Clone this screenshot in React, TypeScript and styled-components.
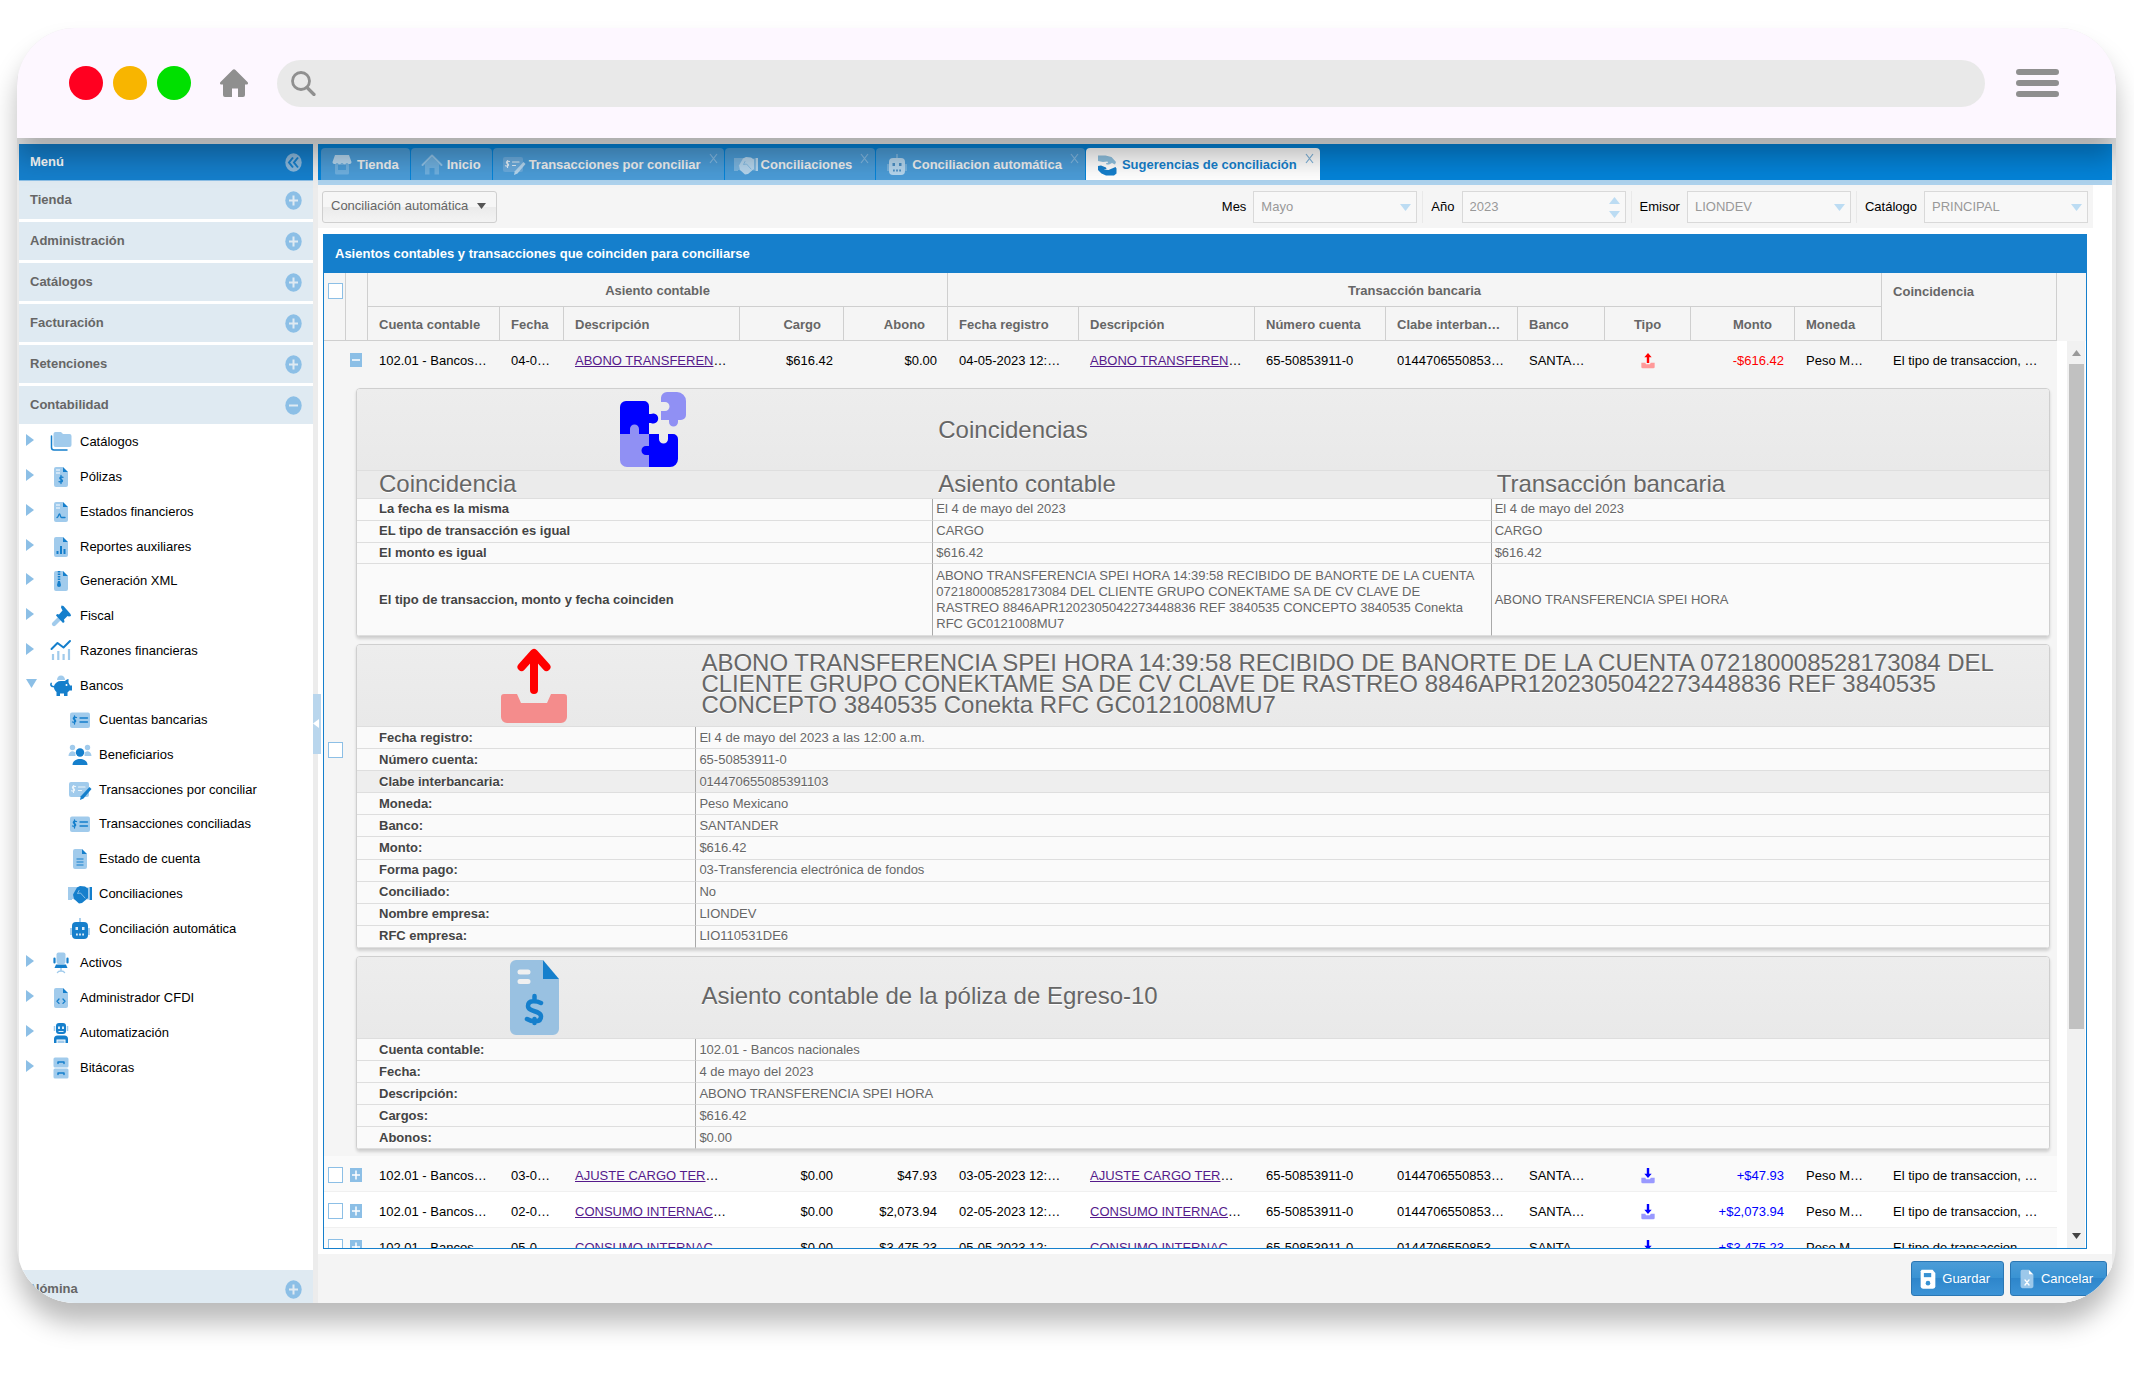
import React from "react";
import styled, { createGlobalStyle, css } from "styled-components";

const BLUE = "#157fcc";
const LIGHT = "#a1cbec";
const SOFT = "#8cbfe6";

const GlobalStyle = createGlobalStyle`
  *, *::before, *::after { box-sizing: border-box; }
  body {
    margin: 0;
    background: #fff;
    font-family: "Liberation Sans", Arial, sans-serif;
    font-size: 13px;
    line-height: 20px;
    color: #000;
  }
  button, input, select { font: inherit; }
  svg { display: block; flex: none; }
`;

/* ---------- window frame ---------- */

const Page = styled.div`
  display: flex;
  flex-direction: column;
  height: 100vh;
  padding: 28px 18px 72px 17px;
`;

const Frame = styled.div`
  display: flex;
  flex-direction: column;
  flex: 1;
  min-height: 0;
  border-radius: 58px;
  overflow: hidden;
  background: #ebebeb;
  box-shadow: 0 20px 26px rgba(0, 0, 0, 0.27);
`;

const BrowserBar = styled.header`
  position: relative;
  z-index: 2;
  display: flex;
  align-items: center;
  flex: none;
  height: 110px;
  padding: 0 57px 0 52px;
  background: #fdf7ff;
  box-shadow: 0 20px 26px rgba(0, 0, 0, 0.27);
`;

const Lights = styled.div`
  display: flex;
  gap: 10px;
`;

const Light = styled.span<{ $color: string }>`
  width: 34px;
  height: 34px;
  border-radius: 50%;
  background: ${(p) => p.$color};
`;

const PlainButton = styled.button`
  display: flex;
  align-items: center;
  justify-content: center;
  padding: 0;
  border: 0;
  background: none;
  cursor: pointer;
`;

const HomeButton = styled(PlainButton)`
  margin: 0 29px;
`;

const AddressBar = styled.label`
  display: flex;
  align-items: center;
  flex: 1;
  height: 47px;
  margin-right: 31px;
  padding: 0 24px 0 14px;
  border-radius: 24px;
  background: #e9e9e9;
`;

const AddressInput = styled.input`
  flex: 1;
  min-width: 0;
  margin-left: 10px;
  border: 0;
  outline: 0;
  background: transparent;
`;

const Workspace = styled.div`
  display: flex;
  flex: 1;
  min-height: 0;
  padding: 6px 4px 0 2px;
`;

/* ---------- sidebar ---------- */

const Sidebar = styled.nav`
  display: flex;
  flex-direction: column;
  flex: none;
  width: 294px;
  background: #fff;
  overflow: hidden;
`;

const SidebarTitle = styled.div`
  display: flex;
  align-items: center;
  justify-content: space-between;
  flex: none;
  height: 37px;
  padding: 0 11px;
  border-bottom: 1px solid ${SOFT};
  background: ${BLUE};
  color: #fff;
  font-weight: bold;
`;

const Accordion = styled.button<{ $pinned?: boolean }>`
  display: flex;
  align-items: center;
  justify-content: space-between;
  flex: none;
  height: 38px;
  margin: 0 0 ${(p) => (p.$pinned ? "-5px" : "3px")};
  margin-top: ${(p) => (p.$pinned ? "auto" : "0")};
  padding: 0 11px;
  border: 0;
  background: #dfeaf2;
  color: #666;
  font-weight: bold;
  text-align: left;
  cursor: pointer;
`;

const Tree = styled.ul`
  display: grid;
  grid-auto-rows: 1fr;
  flex: 0 1 660px;
  margin: -2px 0 0;
  padding: 0;
  list-style: none;
`;

const TreeItem = styled.li<{ $child?: boolean }>`
  display: flex;
  align-items: center;
  padding-left: ${(p) => (p.$child ? "49px" : "7px")};
`;

const TreeArrow = styled.span`
  width: 23px;
  padding-bottom: 4px;
`;

const TreeLabel = styled.a`
  display: flex;
  align-items: center;
  gap: 7px;
  color: #000;
  text-decoration: none;
`;

const Splitter = styled.div`
  position: relative;
  flex: none;
  width: 5px;
  background: #ececec;
`;

const SplitterHandle = styled.button`
  position: absolute;
  z-index: 1;
  left: 0;
  top: calc(50% - 30px);
  display: flex;
  align-items: center;
  width: 8px;
  height: 60px;
  padding: 0;
  border: 0;
  background: #b9d6ed;
`;

/* ---------- main column ---------- */

const Main = styled.main`
  display: flex;
  flex-direction: column;
  flex: 1;
  min-width: 0;
  background: #fff;
`;

const TabBar = styled.div`
  display: flex;
  align-items: flex-end;
  gap: 1px;
  flex: none;
  height: 41px;
  padding-left: 3px;
  border-bottom: 5px solid #add2ed;
  background: #0483d8;
`;

const Tab = styled.button<{ $active?: boolean; $closable?: boolean }>`
  position: relative;
  display: flex;
  align-items: center;
  gap: 3px;
  height: 32px;
  padding: 2px ${(p) => (p.$closable ? "23px" : "11px")} 0 9px;
  border: 0;
  border-radius: 4px 4px 0 0;
  background: ${(p) => (p.$active ? "#fff" : "#4b9cd7")};
  color: ${(p) => (p.$active ? BLUE : "#f0f0f0")};
  font-weight: bold;
  white-space: nowrap;
`;

const TabClose = styled.span`
  position: absolute;
  top: 5px;
  right: 6px;
`;

const Toolbar = styled.div`
  display: flex;
  align-items: center;
  justify-content: space-between;
  flex: none;
  height: 43px;
  margin-right: 19px;
  padding: 0 5px 0 4px;
  background: #f5f5f5;
`;

const MenuButton = styled.button`
  display: flex;
  align-items: center;
  gap: 9px;
  height: 32px;
  padding: 0 10px 2px 8px;
  border: 1px solid #cfcfcf;
  border-radius: 3px;
  background: linear-gradient(#f6f6f6 50%, #ebebeb 50%, #f3f3f3);
  color: #666;
`;

const Fields = styled.div`
  display: flex;
  align-items: center;
`;

const Field = styled.div`
  display: flex;
  align-items: center;
  gap: 7px;
  & + & {
    margin-left: 5px;
    padding-left: 8px;
    border-left: 1px solid #e9e9e9;
  }
`;

const FieldBox = styled.div`
  position: relative;
  width: 164px;
  height: 32px;
`;

const controlStyle = css`
  width: 100%;
  height: 100%;
  padding: 0 30px 0 7px;
  border: 1px solid #d9d9d9;
  border-radius: 0;
  background: #f8f8f8;
  color: #999;
  opacity: 1;
  appearance: none;
`;

const Select = styled.select`
  ${controlStyle}
`;

const TextInput = styled.input`
  ${controlStyle}
`;

const FieldTrigger = styled.span`
  position: absolute;
  top: 0;
  right: 6px;
  display: flex;
  flex-direction: column;
  justify-content: center;
  gap: 7px;
  height: 100%;
  padding-top: 2px;
  pointer-events: none;
`;

const Content = styled.div`
  display: flex;
  flex: 1;
  min-height: 0;
  padding: 6px 25px 5px 5px;
`;

const Panel = styled.section`
  display: flex;
  flex-direction: column;
  flex: 1;
  min-width: 0;
  border: 1px solid ${BLUE};
  background: #fff;
`;

const PanelTitle = styled.h2`
  flex: none;
  margin: 0;
  padding: 9px 11px;
  background: ${BLUE};
  color: #fff;
  font-size: 13px;
  line-height: 20px;
  font-weight: bold;
`;

/* ---------- grid ---------- */

const GridHead = styled.div`
  flex: none;
  padding-right: 29px;
  background: #f5f5f5;
`;

const GridTable = styled.table`
  width: 100%;
  table-layout: fixed;
  border-collapse: separate;
  border-spacing: 0;
`;

const HeadCell = styled.th<{ $align?: string; $tall?: boolean }>`
  height: 34px;
  padding: ${(p) => (p.$tall ? "9px" : "2px")} ${(p) => (p.$align === "right" ? "22px" : "11px")} 0 11px;
  border-right: 1px solid #cfcfcf;
  border-bottom: 1px solid #cfcfcf;
  color: #666;
  text-align: ${(p) => p.$align || "left"};
  vertical-align: ${(p) => (p.$tall ? "top" : "middle")};
  overflow: hidden;
  text-overflow: ellipsis;
  white-space: nowrap;
`;

const HeadCheck = styled(HeadCell)`
  padding: 10px 0 0 4px;
  vertical-align: top;
`;

const GridBody = styled.div`
  display: flex;
  flex: 1;
  min-height: 0;
  padding-right: 1px;
`;

const GridRows = styled.div`
  flex: 1;
  min-width: 0;
  margin-right: 10px;
  overflow: hidden;
`;

const Row = styled.tr<{ $shade: string }>`
  background: ${(p) => p.$shade};
`;

const Cell = styled.td<{ $align?: string; $color?: string; $open?: boolean }>`
  height: 36px;
  padding: 4px 11px 0;
  border-bottom: 1px solid ${(p) => (p.$open ? "transparent" : "#f0f0f0")};
  color: ${(p) => p.$color || "#000"};
  text-align: ${(p) => p.$align || "left"};
  overflow: hidden;
  text-overflow: ellipsis;
  white-space: nowrap;
`;

const IconCell = styled(Cell)`
  padding: 3px 0 0 4px;
`;

const Centered = styled.span`
  display: flex;
  justify-content: center;
`;

const Checkbox = styled.input`
  display: block;
  width: 15px;
  height: 16px;
  margin: 0;
  border: 1px solid ${SOFT};
  background: #fff;
  appearance: none;
`;

const Link = styled.a`
  color: #551a8b;
  text-decoration: underline;
`;

const DetailCell = styled.td`
  padding: 11px 7px 6px 10px;
`;

const Cards = styled.div`
  display: flex;
  flex-direction: column;
  gap: 7px;
`;

const Card = styled.table<{ $height: number }>`
  width: 100%;
  height: ${(p) => p.$height}px;
  table-layout: fixed;
  border-collapse: separate;
  border-spacing: 0;
  border: 1px solid #cfcfcf;
  border-radius: 4px;
  background: #fafafa;
  box-shadow: 0 2px 3px rgba(0, 0, 0, 0.15);
  color: #666;
  text-shadow: 0 1px 0 #fff;
  overflow: hidden;
`;

const titleText = css`
  font-size: 24px;
  line-height: 21px;
  font-weight: normal;
  text-align: left;
`;

const CardIcon = styled.th`
  height: 82px;
  padding: 0 0 0 16px;
  border-bottom: 1px solid #dedede;
  background: linear-gradient(#ededed, #e9e9e9);
`;

const CardTitle = styled.th<{ $raised?: boolean }>`
  ${titleText}
  padding: 0 6px ${(p) => (p.$raised ? "4px" : "0")};
  border-bottom: 1px solid #dedede;
  background: linear-gradient(#ededed, #e9e9e9);
`;

const CardHead = styled.th<{ $first?: boolean }>`
  ${titleText}
  height: 28px;
  padding: 0 6px 2px ${(p) => (p.$first ? "22px" : "6px")};
  border-bottom: 1px solid #dedede;
  background: #ebebeb;
`;

const Label = styled.th<{ $mark?: boolean }>`
  padding: 2px 4px 2px 22px;
  border-bottom: 1px solid #dedede;
  background: ${(p) => (p.$mark ? "#eee" : "#fafafa")};
  color: #444;
  line-height: 16px;
  text-align: left;
`;

const Value = styled.td<{ $mark?: boolean }>`
  padding: 2px 6px 2px 3px;
  border-left: 1px solid #a9a9a9;
  border-bottom: 1px solid #dedede;
  background: ${(p) => (p.$mark ? "#eee" : "#fafafa")};
  line-height: 16px;
`;

const Scrollbar = styled.div`
  display: flex;
  flex-direction: column;
  align-items: center;
  flex: none;
  width: 18px;
  padding: 9px 1px 9px;
  background: #f1f1f1;
`;

const Thumb = styled.span`
  flex: 664;
  width: 15px;
  margin-top: 8px;
  background: #c1c1c1;
`;

const TrackRest = styled.span`
  flex: 204;
`;

const Footer = styled.footer`
  display: flex;
  align-items: center;
  justify-content: flex-end;
  gap: 6px;
  flex: none;
  height: 49px;
  padding-right: 5px;
  background: #f4f4f4;
`;

const ActionButton = styled.button`
  display: flex;
  align-items: center;
  gap: 3px;
  height: 35px;
  padding: 0 13px 0 5px;
  border: 1px solid #2a77b4;
  border-radius: 3px;
  background: linear-gradient(#4b9cd7, #3892d3 50%, #2e86cb 50%, #3c93d6);
  color: #fff;
`;

/* ---------- icons ---------- */

type IconProps = { name: string; light?: string; dark?: string; size?: number };

const DOC = "M7 2h7v5h5v13a2 2 0 0 1-2 2H7a2 2 0 0 1-2-2V4a2 2 0 0 1 2-2z";
const FOLD = "M14 2l5 5h-5z";

function glyph(name: string, l: string, d: string) {
  const doc = (
    <>
      <path d={DOC} fill={l} />
      <path d={FOLD} fill={d} />
    </>
  );
  const lines = <path d="M7 5h4M7 8h4" stroke="#fff" strokeWidth="1.2" />;
  const stroke = { fill: "none", stroke: d, strokeWidth: 1.5, strokeLinecap: "round" as const, strokeLinejoin: "round" as const };
  switch (name) {
    case "folder":
      return (
        <>
          <path d="M2.500 6v11.500a2.500 2.500 0 0 0 2.500 2.500H18" {...stroke} />
          <path d="M6.500 2H12l2 2h6.500a2 2 0 0 1 2 2V15a2 2 0 0 1-2 2H6.500a2 2 0 0 1-2-2V4a2 2 0 0 1 2-2z" fill={l} />
        </>
      );
    case "invoice":
      return (
        <>
          {doc}
          {lines}
          <path d="M14 12.300c-3-1.300-4.300 1.400-2 2.100 2.600.8 1.600 3.600-2 2.300M12 10.500v8" {...stroke} strokeWidth={1.300} />
        </>
      );
    case "contract":
      return (
        <>
          {doc}
          {lines}
          <path d="M8 17.500c1.500 0 1.500-3.500 2.500-3.500s.5 3.500 2 3.500h3.500" {...stroke} strokeWidth={1.300} />
        </>
      );
    case "report":
      return (
        <>
          {doc}
          <path d="M8.500 19v-3M12 19v-8M15.500 19v-5" stroke={d} strokeWidth="2" />
        </>
      );
    case "zip":
      return (
        <>
          {doc}
          <path d="M10 2v10" stroke={d} strokeWidth="2.500" strokeDasharray="1.500 1" />
          <path d="M9 12h2l1 4a2 2 0 1 1-4 0z" fill={d} />
        </>
      );
    case "gavel":
      return (
        <>
          <path d="M10 12l3 3-6.500 6.500a2 2 0 0 1-3-3z" fill={l} />
          <path d="M12.500 1.500l2 .5 7 8 .5 2-2 .5-1.500-.5-3.500 3.500.5 2.500-1.500 1-7-7.500 1-1.500 2 .5 3.500-4-1.500-3z" fill={d} />
        </>
      );
    case "trend":
      return (
        <>
          <path d="M4 21v-6M9.300 21v-9M14.600 21v-6M20 21V10" stroke={l} strokeWidth="2.200" />
          <path d="M2.500 10l6-6 6 4.500 6.500-6.500" {...stroke} strokeWidth={2} />
        </>
      );
    case "piggy":
      return (
        <>
          <path d="M8 6a4 4.500 0 0 1 8 0z" fill={l} />
          <path d="M3 9c-1 2 .5 3 2 3 1-3 3.500-5 7-5h4c1-1 2-2 3.500-2v3.500l1.500 3h2v5H20.500l-2 2v3.500h-3.500v-2.500H11v2.500H7.500v-4C6 16.500 5 15 5 13.500 1.500 13.500 0 10.500 2 8.500z" fill={d} />
          <circle cx="17.500" cy="11" r="1" fill="#fff" />
        </>
      );
    case "check":
      return (
        <>
          <rect x="2" y="4.500" width="20" height="15.500" rx="2" fill={l} />
          <path d="M8.500 9.500c-3-1.200-4.300 1.200-2 2.200s1 3.500-2 2.300M6.500 8v8M12 10h7.500M12 14h7.500" {...stroke} strokeWidth={1.300} />
        </>
      );
    case "checkEdit":
      return (
        <>
          <rect x="1" y="4" width="20" height="15" rx="2" fill={l} />
          <path d="M7.500 8.500c-3-1.200-4 1.200-2 2.100s1 3.300-2 2.200M5.500 7.500v7M10.500 9H17M10.500 12.500h3" {...stroke} stroke="#fff" strokeOpacity={0.8} strokeWidth={1.200} />
          <path d="M21.500 9l2 2-8 9.500-3.500 1.500.8-3.800z" fill={d} />
        </>
      );
    case "users":
      return (
        <>
          <circle cx="4.500" cy="4.500" r="2.700" fill={l} />
          <circle cx="19.500" cy="4.500" r="2.700" fill={l} />
          <path d="M.5 13c0-6 7-6 7-2v2zM16.500 13v-2c0-4 7-4 7 2z" fill={l} />
          <circle cx="12" cy="9.500" r="4.200" fill={d} />
          <path d="M4.500 22c0-8 15-8 15 0z" fill={d} />
        </>
      );
    case "doc":
      return (
        <>
          {doc}
          <path d="M8.500 12h7M8.500 15h7M8.500 18h7" stroke={d} strokeWidth="1.200" />
        </>
      );
    case "shake":
      return (
        <>
          <path d="M0 5h4v13H0zM4 5h7l-5 9 2 3.500-4-.5zM19 5.500h2v12h-2z" fill={l} />
          <path d="M9 5.500l3-1.500 5 .5 3 2v9.500l-6 5-3 .5-5-4.500-1-4.500z" fill={d} />
          <path d="M21.500 5H24v13h-2.500z" fill={d} />
          <path d="M11 8.500l-1.500 3 3-.5 4.500 5" {...stroke} stroke={l} strokeWidth={0.800} />
        </>
      );
    case "robot":
      return (
        <>
          <path d="M12 1v5M3 11v7M21 11v7" stroke={l} strokeWidth="1.800" />
          <rect x="4" y="5" width="16" height="17" rx="4" fill={d} />
          <path d="M7.500 10h2.500v3H7.500zM14 10h2.500v3H14zM8 16.500h1.800v2H8zM11.100 16.500h1.800v2h-1.800zM14.200 16.500H16v2h-1.800z" fill={l === LIGHT ? "#dcecf8" : "#4b8fc4"} />
        </>
      );
    case "chair":
      return (
        <>
          <rect x="7.500" y="1.500" width="9" height="11.500" rx="2" fill={l} />
          <path d="M12 15v5M8.500 21.500c1-2 6-2 7 0" {...stroke} stroke={l} />
          <path d="M7 13.500h10l1.500 3.500h-13z" fill={d} />
          <path d="M5.500 7.500v4M18.500 7.500v4" {...stroke} strokeWidth={2.200} />
        </>
      );
    case "code":
      return (
        <>
          {doc}
          <path d="M10 13l-2 2.200 2 2.200M14 13l2 2.200-2 2.200" {...stroke} strokeWidth={1.300} />
        </>
      );
    case "bot":
      return (
        <>
          <rect x="7" y="2" width="10" height="11" rx="3" fill={d} />
          <path d="M5.500 5v5M18.500 5v5" stroke={l} strokeWidth="1.500" />
          <path d="M9 5.500h2v2.500H9zM13 5.500h2v2.500h-2zM9.500 10h5v1h-5z" fill="#dcecf8" />
          <path d="M5 22v-4a3.500 3.500 0 0 1 3.500-3.500h7A3.500 3.500 0 0 1 19 18v4h-2.500v-3.500h-9V22z" fill={d} />
          <path d="M8.500 19.500h7V22h-7z" fill={l} />
        </>
      );
    case "cabinet":
      return (
        <>
          <rect x="4.500" y="1.500" width="15" height="10" rx="1.500" fill={l} />
          <rect x="4.500" y="12.500" width="15" height="10" rx="1.500" fill={l} />
          <path d="M9 7.500V6h6v1.500M9 18.500V17h6v1.500" {...stroke} />
        </>
      );
    case "store":
      return (
        <>
          <path d="M5 11h14v9a1.500 1.500 0 0 1-1.500 1.500h-11A1.500 1.500 0 0 1 5 20z" fill={l} />
          <path d="M8 12h8v5H8z" fill="#4b9cd7" />
          <path d="M5 2h14l2.500 7c0 2.500-3.500 2.500-4.500 1-1 1.500-4 1.500-5 0-1 1.500-4 1.500-5 0-1 1.500-4.500 1.500-4.500-1z" fill={d} />
        </>
      );
    case "house":
      return (
        <>
          <path d="M5 11l7-7 7 7v10.500h-4.500V15h-5v6.500H5z" fill={l} />
          <path d="M2.500 12L12 2.500l9.500 9.500" {...stroke} strokeWidth={2} />
        </>
      );
    case "hands":
      return (
        <>
          <path d="M3 2.500h7.500l6 1.500 4.500 5-1 2.500-3-1.500-3 1.500h-2.500l-.5-1.500h2l-.5-1.500L8 9 3 8z" fill={l} />
          <path d="M3 13l3-.5 5 2 .5 1.500-3 .5 5 .5 7-3 1 1.500v5l-2.500 2H11l-4.500-2L3 17z" fill={d} />
        </>
      );
    case "save":
      return (
        <>
          <path d="M5 2h12l3 3.500V20a2.500 2.500 0 0 1-2.500 2.500h-11A2.500 2.500 0 0 1 4 20V3.500z" fill={d} />
          <path d="M7.500 5.500h8V10h-8z" fill="#3892d3" />
          <circle cx="12" cy="16.500" r="2.500" fill="#3892d3" />
        </>
      );
    case "cancel":
      return (
        <>
          <path d={DOC} fill={l} />
          <path d="M14 2l5 5h-5z" fill={d} />
          <path d="M9.800 13l4.400 5.500M14.200 13l-4.400 5.500" {...stroke} />
        </>
      );
    case "up":
      return (
        <>
          <path d="M2 14.500h6l1 2.500h6l1-2.500h6V21a2 2 0 0 1-2 2H4a2 2 0 0 1-2-2z" fill={l} />
          <path d="M12 0l5.500 6.500h-3.700V15h-3.600V6.500H6.500z" fill={d} />
        </>
      );
    case "down":
      return (
        <>
          <path d="M2 14.500h6l1 2.500h6l1-2.500h6V21a2 2 0 0 1-2 2H4a2 2 0 0 1-2-2z" fill={l} />
          <path d="M12 15L6.500 8.500h3.700V0h3.600v8.500h3.700z" fill={d} />
        </>
      );
    default:
      return null;
  }
}

function Icon({ name, light = LIGHT, dark = BLUE, size = 24 }: IconProps) {
  return (
    <svg width={size} height={size} viewBox="0 0 24 24" aria-hidden="true">
      {glyph(name, light, dark)}
    </svg>
  );
}

function Triangle({ dir, color, width = 11, height = 8 }: { dir: "up" | "down" | "left" | "right"; color: string; width?: number; height?: number }) {
  const paths = { up: "M0 10L5 0l5 10z", down: "M0 0h10L5 10z", left: "M10 0v10L0 5z", right: "M0 0l10 5-10 5z" };
  return (
    <svg width={width} height={height} viewBox="0 0 10 10" preserveAspectRatio="none" aria-hidden="true">
      <path d={paths[dir]} fill={color} />
    </svg>
  );
}

function RoundSign({ open }: { open?: boolean }) {
  return (
    <svg width="17" height="19" viewBox="0 0 17 19" aria-hidden="true">
      <ellipse cx="8.500" cy="9.500" rx="8.200" ry="9.300" fill={SOFT} />
      <path d={open ? "M4 9.500h9" : "M4 9.500h9M8.500 4.500v10"} stroke="#dfeaf2" strokeWidth="2" />
    </svg>
  );
}

function CollapseSign() {
  return (
    <svg width="17" height="19" viewBox="0 0 17 19" aria-hidden="true">
      <ellipse cx="8.500" cy="9.500" rx="8.200" ry="9.300" fill="#8ab8dc" />
      <path d="M8 4.500l-4 5 4 5M13 4.500l-4 5 4 5" fill="none" stroke={BLUE} strokeWidth="2" />
    </svg>
  );
}

function Expander({ open }: { open?: boolean }) {
  return (
    <svg width="12" height="14" viewBox="0 0 12 14" aria-hidden="true">
      <rect width="12" height="14" fill={SOFT} />
      <path d={open ? "M2 7h8" : "M2 7h8M6 2.500v9"} stroke="#fff" strokeWidth="1.500" />
    </svg>
  );
}

function PuzzleArt() {
  const soft = "#9090f4";
  const full = "#0000ff";
  return (
    <svg width="66" height="75" viewBox="0 0 66 75" aria-hidden="true">
      <path d="M6 9h18a5 5 0 0 1 5 5v8h2a5 5 0 1 1 0 9h-2v11H0V15a6 6 0 0 1 6-6z" fill={full} />
      <path d="M0 42h10v-5a4.500 4.500 0 0 1 9 0v5h10v33H7a7 7 0 0 1-7-7z" fill={soft} />
      <path d="M29 42h10v5a4.500 4.500 0 0 0 9 0v-5h5a5 5 0 0 1 5 5v20a8 8 0 0 1-8 8H29V63h-3a4.500 4.500 0 1 1 0-9h3z" fill={full} />
      <path d="M41 6a6 6 0 0 1 6-6h10a9 9 0 0 1 9 9v14a5 5 0 0 1-5 5h-3v2a4.500 4.500 0 1 1-9 0v-2h-8V19h4a4.500 4.500 0 0 0 0-9h-4z" fill={soft} />
    </svg>
  );
}

function UploadArt() {
  return (
    <svg width="66" height="75" viewBox="0 0 66 75" aria-hidden="true">
      <path d="M3 46h13l4 9h26l4-9h13a3 3 0 0 1 3 3v20a6 6 0 0 1-6 6H6a6 6 0 0 1-6-6V49a3 3 0 0 1 3-3z" fill="#f48c8c" />
      <path d="M33 42V6M20.500 19L33 5l12.500 14" fill="none" stroke="#f00" strokeWidth="8" strokeLinecap="round" strokeLinejoin="round" />
    </svg>
  );
}

function InvoiceArt() {
  return (
    <svg width="49" height="75" viewBox="0 0 49 75" aria-hidden="true">
      <path d="M6 0h27v19h16v50a6 6 0 0 1-6 6H6a6 6 0 0 1-6-6V6a6 6 0 0 1 6-6z" fill="#99c1e1" />
      <path d="M33 0l16 19H33z" fill={BLUE} />
      <path d="M10 12h8M10 21.500h8" stroke="#f0f0f0" strokeWidth="5" strokeLinecap="round" />
      <path d="M31 43c-4-2-13-3.500-13 3 0 6.500 13 4 13 10.500 0 6.500-9 5.500-14 2.500M24.500 36v5M24.500 59v4" fill="none" stroke={BLUE} strokeWidth="4.500" strokeLinecap="round" />
    </svg>
  );
}

/* ---------- data ---------- */

const sections = ["Tienda", "Administración", "Catálogos", "Facturación", "Retenciones"];

const tree: { label: string; icon: string; child?: boolean; open?: boolean }[] = [
  { label: "Catálogos", icon: "folder" },
  { label: "Pólizas", icon: "invoice" },
  { label: "Estados financieros", icon: "contract" },
  { label: "Reportes auxiliares", icon: "report" },
  { label: "Generación XML", icon: "zip" },
  { label: "Fiscal", icon: "gavel" },
  { label: "Razones financieras", icon: "trend" },
  { label: "Bancos", icon: "piggy", open: true },
  { label: "Cuentas bancarias", icon: "check", child: true },
  { label: "Beneficiarios", icon: "users", child: true },
  { label: "Transacciones por conciliar", icon: "checkEdit", child: true },
  { label: "Transacciones conciliadas", icon: "check", child: true },
  { label: "Estado de cuenta", icon: "doc", child: true },
  { label: "Conciliaciones", icon: "shake", child: true },
  { label: "Conciliación automática", icon: "robot", child: true },
  { label: "Activos", icon: "chair" },
  { label: "Administrador CFDI", icon: "code" },
  { label: "Automatización", icon: "bot" },
  { label: "Bitácoras", icon: "cabinet" },
];

const tabs = [
  { label: "Tienda", icon: "store", closable: false, light: "#6fb0df", dark: "#b5d6ee" },
  { label: "Inicio", icon: "house", closable: false, light: "#6fb0df", dark: "#8fc1e6" },
  { label: "Transacciones por conciliar", icon: "checkEdit", closable: true, light: "#6aabdd", dark: "#b5d6ee" },
  { label: "Conciliaciones", icon: "shake", closable: true, light: "#7ab5e0", dark: "#b5d6ee" },
  { label: "Conciliacion automática", icon: "robot", closable: true, light: "#7ab5e0", dark: "#b5d6ee" },
  { label: "Sugerencias de conciliación", icon: "hands", closable: true, active: true, light: "#8fc1e0", dark: BLUE },
];

const columns = [22, 22, 132, 64, 176, 104, 104, 131, 176, 131, 132, 87, 86, 104, 87, 175];

const subHeads: [string, string?][] = [
  ["Cuenta contable"],
  ["Fecha"],
  ["Descripción"],
  ["Cargo", "right"],
  ["Abono", "right"],
  ["Fecha registro"],
  ["Descripción"],
  ["Número cuenta"],
  ["Clabe interban…"],
  ["Banco"],
  ["Tipo", "center"],
  ["Monto", "right"],
  ["Moneda"],
];

type Entry = { day: string; text: string; charge: string; credit: string; amount: string; out?: boolean };

const entries: Entry[] = [
  { day: "04", text: "ABONO TRANSFEREN", charge: "$616.42", credit: "$0.00", amount: "-$616.42", out: true },
  { day: "03", text: "AJUSTE CARGO TER", charge: "$0.00", credit: "$47.93", amount: "+$47.93" },
  { day: "02", text: "CONSUMO INTERNAC", charge: "$0.00", credit: "$2,073.94", amount: "+$2,073.94" },
  { day: "05", text: "CONSUMO INTERNAC", charge: "$0.00", credit: "$3,475.23", amount: "+$3,475.23" },
];

const longText =
  "ABONO TRANSFERENCIA SPEI HORA 14:39:58 RECIBIDO DE BANORTE DE LA CUENTA 072180008528173084 DEL CLIENTE GRUPO CONEKTAME SA DE CV CLAVE DE RASTREO 8846APR1202305042273448836 REF 3840535 CONCEPTO 3840535 Conekta RFC GC0121008MU7";

const matches = [
  ["La fecha es la misma", "El 4 de mayo del 2023", "El 4 de mayo del 2023"],
  ["EL tipo de transacción es igual", "CARGO", "CARGO"],
  ["El monto es igual", "$616.42", "$616.42"],
  ["El tipo de transaccion, monto y fecha coinciden", longText, "ABONO TRANSFERENCIA SPEI HORA"],
];

const bankFacts: [string, string][] = [
  ["Fecha registro:", "El 4 de mayo del 2023 a las 12:00 a.m."],
  ["Número cuenta:", "65-50853911-0"],
  ["Clabe interbancaria:", "014470655085391103"],
  ["Moneda:", "Peso Mexicano"],
  ["Banco:", "SANTANDER"],
  ["Monto:", "$616.42"],
  ["Forma pago:", "03-Transferencia electrónica de fondos"],
  ["Conciliado:", "No"],
  ["Nombre empresa:", "LIONDEV"],
  ["RFC empresa:", "LIO110531DE6"],
];

const entryFacts: [string, string][] = [
  ["Cuenta contable:", "102.01 - Bancos nacionales"],
  ["Fecha:", "4 de mayo del 2023"],
  ["Descripción:", "ABONO TRANSFERENCIA SPEI HORA"],
  ["Cargos:", "$616.42"],
  ["Abonos:", "$0.00"],
];

/* ---------- parts ---------- */

function Columns() {
  return (
    <colgroup>
      {columns.map((w, i) => (
        <col key={i} width={w} />
      ))}
    </colgroup>
  );
}

function SelectField({ id, label, value }: { id: string; label: string; value: string }) {
  return (
    <Field>
      <label htmlFor={id}>{label}</label>
      <FieldBox>
        <Select id={id} disabled defaultValue={value}>
          <option>{value}</option>
        </Select>
        <FieldTrigger>
          <Triangle dir="down" color="#bcdcf3" height={7} />
        </FieldTrigger>
      </FieldBox>
    </Field>
  );
}

function FactCard({ art, title, facts, height, marked }: { art: React.ReactNode; title: string; facts: [string, string][]; height: number; marked?: number }) {
  return (
    <Card $height={height}>
      <colgroup>
        <col style={{ width: "20%" }} />
        <col />
      </colgroup>
      <thead>
        <tr>
          <CardIcon>
            <Centered>{art}</Centered>
          </CardIcon>
          <CardTitle $raised>{title}</CardTitle>
        </tr>
      </thead>
      <tbody>
        {facts.map(([label, value], i) => (
          <tr key={label}>
            <Label scope="row" $mark={i === marked}>{label}</Label>
            <Value $mark={i === marked}>{value}</Value>
          </tr>
        ))}
      </tbody>
    </Card>
  );
}

function MatchCard() {
  return (
    <Card $height={249}>
      <colgroup>
        <col style={{ width: "34%" }} />
        <col style={{ width: "33%" }} />
        <col style={{ width: "33%" }} />
      </colgroup>
      <thead>
        <tr>
          <CardIcon>
            <Centered>
              <PuzzleArt />
            </Centered>
          </CardIcon>
          <CardTitle colSpan={2}>Coincidencias</CardTitle>
        </tr>
        <tr>
          <CardHead $first>Coincidencia</CardHead>
          <CardHead>Asiento contable</CardHead>
          <CardHead>Transacción bancaria</CardHead>
        </tr>
      </thead>
      <tbody>
        {matches.map(([label, a, b]) => (
          <tr key={label}>
            <Label scope="row">{label}</Label>
            <Value>{a}</Value>
            <Value>{b}</Value>
          </tr>
        ))}
      </tbody>
    </Card>
  );
}

function EntryRows({ entry, index }: { entry: Entry; index: number }) {
  const open = index === 0;
  const shade = open ? "#f5f5f5" : index % 2 ? "#fafafa" : "#fff";
  const tint = entry.out ? "#f00" : "#00f";
  return (
    <>
      <Row $shade={shade}>
        <IconCell rowSpan={open ? 2 : 1} $open={open}>
          <Checkbox type="checkbox" aria-label={`Seleccionar ${entry.text}`} />
        </IconCell>
        <IconCell $open={open}>
          <PlainButton aria-label={open ? "Contraer" : "Expandir"}>
            <Expander open={open} />
          </PlainButton>
        </IconCell>
        <Cell $open={open}>102.01 - Bancos…</Cell>
        <Cell $open={open}>{entry.day}-0…</Cell>
        <Cell $open={open}><Link href="#asiento">{entry.text}</Link>…</Cell>
        <Cell $open={open} $align="right">{entry.charge}</Cell>
        <Cell $open={open} $align="right">{entry.credit}</Cell>
        <Cell $open={open}>{entry.day}-05-2023 12:…</Cell>
        <Cell $open={open}><Link href="#transaccion">{entry.text}</Link>…</Cell>
        <Cell $open={open}>65-50853911-0</Cell>
        <Cell $open={open}>0144706550853…</Cell>
        <Cell $open={open}>SANTA…</Cell>
        <Cell $open={open}>
          <Centered>
            <Icon name={entry.out ? "up" : "down"} size={16} dark={tint} light={entry.out ? "#f99" : "#99f"} />
          </Centered>
        </Cell>
        <Cell $open={open} $align="right" $color={tint}>{entry.amount}</Cell>
        <Cell $open={open}>Peso M…</Cell>
        <Cell $open={open}>El tipo de transaccion, …</Cell>
      </Row>
      {open && (
        <Row $shade={shade}>
          <DetailCell colSpan={15}>
            <Cards>
              <MatchCard />
              <FactCard art={<UploadArt />} title={longText} facts={bankFacts} height={305} marked={2} />
              <FactCard art={<InvoiceArt />} title="Asiento contable de la póliza de Egreso-10" facts={entryFacts} height={194} />
            </Cards>
          </DetailCell>
        </Row>
      )}
    </>
  );
}

export default function App() {
  return (
    <Page>
      <GlobalStyle />
      <Frame>
        <BrowserBar>
          <Lights>
            <Light $color="#ff0020" />
            <Light $color="#f8b500" />
            <Light $color="#00e000" />
          </Lights>
          <HomeButton aria-label="Inicio del navegador">
            <svg width="28" height="28" viewBox="0 0 28 28" aria-hidden="true">
              <path d="M12.500 1a2 2 0 0 1 3 0l12 12c1 1.200.5 2.500-1 2.500H25V26a2 2 0 0 1-2 2h-5v-8.500h-6V28H5a2 2 0 0 1-2-2V15.500H1.500c-1.500 0-2-1.300-1-2.500z" fill="#8f8f8f" />
            </svg>
          </HomeButton>
          <AddressBar>
            <svg width="25" height="25" viewBox="0 0 25 25" aria-hidden="true">
              <circle cx="10" cy="10" r="8.500" fill="none" stroke="#8f8f8f" strokeWidth="2.800" />
              <path d="M16 16.500l7 7" stroke="#8f8f8f" strokeWidth="3.200" strokeLinecap="round" />
            </svg>
            <AddressInput type="text" aria-label="Dirección" />
          </AddressBar>
          <PlainButton aria-label="Opciones">
            <svg width="43" height="28" viewBox="0 0 43 28" aria-hidden="true">
              <path d="M3 3h37M3 14h37M3 25h37" stroke="#8f8f8f" strokeWidth="6" strokeLinecap="round" />
            </svg>
          </PlainButton>
        </BrowserBar>

        <Workspace>
          <Sidebar>
            <SidebarTitle>
              Menú
              <CollapseSign />
            </SidebarTitle>
            {sections.map((s) => (
              <Accordion key={s}>
                {s}
                <RoundSign />
              </Accordion>
            ))}
            <Accordion>
              Contabilidad
              <RoundSign open />
            </Accordion>
            <Tree>
              {tree.map((item) => (
                <TreeItem key={item.label} $child={item.child}>
                  {!item.child && (
                    <TreeArrow>
                      {item.open ? (
                        <Triangle dir="down" color={SOFT} width={11} height={9} />
                      ) : (
                        <Triangle dir="right" color={SOFT} width={8} height={12} />
                      )}
                    </TreeArrow>
                  )}
                  <TreeLabel href="#menu">
                    <Icon name={item.icon} />
                    {item.label}
                  </TreeLabel>
                </TreeItem>
              ))}
            </Tree>
            <Accordion $pinned>
              Nómina
              <RoundSign />
            </Accordion>
          </Sidebar>

          <Splitter>
            <SplitterHandle aria-label="Ocultar menú">
              <Triangle dir="left" color="#fff" width={6} height={9} />
            </SplitterHandle>
          </Splitter>

          <Main>
            <TabBar>
              {tabs.map((t) => (
                <Tab key={t.label} $active={t.active} $closable={t.closable}>
                  <Icon name={t.icon} light={t.light} dark={t.dark} />
                  {t.label}
                  {t.closable && (
                    <TabClose>
                      <svg width="9" height="11" viewBox="0 0 9 11" aria-hidden="true">
                        <path d="M1 1l7 9M8 1l-7 9" stroke={t.active ? "#7fb4dc" : "#85bae3"} strokeWidth="1.200" />
                      </svg>
                    </TabClose>
                  )}
                </Tab>
              ))}
            </TabBar>

            <Toolbar>
              <MenuButton>
                Conciliación automática
                <Triangle dir="down" color="#555" width={9} height={6} />
              </MenuButton>
              <Fields>
                <SelectField id="mes" label="Mes" value="Mayo" />
                <Field>
                  <label htmlFor="anio">Año</label>
                  <FieldBox>
                    <TextInput id="anio" type="text" disabled defaultValue="2023" />
                    <FieldTrigger>
                      <Triangle dir="up" color="#bcdcf3" height={7} />
                      <Triangle dir="down" color="#bcdcf3" height={7} />
                    </FieldTrigger>
                  </FieldBox>
                </Field>
                <SelectField id="emisor" label="Emisor" value="LIONDEV" />
                <SelectField id="catalogo" label="Catálogo" value="PRINCIPAL" />
              </Fields>
            </Toolbar>

            <Content>
              <Panel>
                <PanelTitle>Asientos contables y transacciones que coinciden para conciliarse</PanelTitle>
                <GridHead>
                  <GridTable>
                    <Columns />
                    <thead>
                      <tr>
                        <HeadCheck rowSpan={2}>
                          <Checkbox type="checkbox" aria-label="Seleccionar todo" />
                        </HeadCheck>
                        <HeadCell rowSpan={2} />
                        <HeadCell colSpan={5} $align="center">Asiento contable</HeadCell>
                        <HeadCell colSpan={8} $align="center">Transacción bancaria</HeadCell>
                        <HeadCell rowSpan={2} $tall>Coincidencia</HeadCell>
                      </tr>
                      <tr>
                        {subHeads.map(([label, align], i) => (
                          <HeadCell key={i} $align={align}>{label}</HeadCell>
                        ))}
                      </tr>
                    </thead>
                  </GridTable>
                </GridHead>
                <GridBody>
                  <GridRows>
                    <GridTable>
                      <Columns />
                      <tbody>
                        {entries.map((e, i) => (
                          <EntryRows key={i} entry={e} index={i} />
                        ))}
                      </tbody>
                    </GridTable>
                  </GridRows>
                  <Scrollbar>
                    <Triangle dir="up" color="#999" width={9} height={6} />
                    <Thumb />
                    <TrackRest />
                    <Triangle dir="down" color="#444" width={9} height={6} />
                  </Scrollbar>
                </GridBody>
              </Panel>
            </Content>

            <Footer>
              <ActionButton>
                <Icon name="save" size={22} dark="#fff" />
                Guardar
              </ActionButton>
              <ActionButton>
                <Icon name="cancel" size={22} light="#9cc8ea" dark="#fff" />
                Cancelar
              </ActionButton>
            </Footer>
          </Main>
        </Workspace>
      </Frame>
    </Page>
  );
}
